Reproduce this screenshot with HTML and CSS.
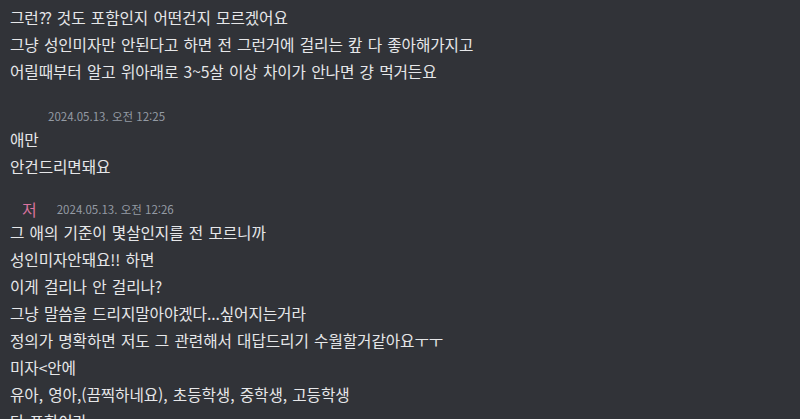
FILE: index.html
```html
<!DOCTYPE html>
<html lang="ko">
<head>
<meta charset="utf-8">
<link rel="stylesheet" href="styles.css">
</head>
<body>
<div class="chat">
  <div class="group first">
    <div class="line">그런<span class="q">??</span> 것도 포함인지 어떤건지 모르겠어요</div>
    <div class="line">그냥 성인미자만 안된다고 하면 전 그런거에 걸리는 캎 다 좋아해가지고</div>
    <div class="line">어릴때부터 알고 위아래로 3~5살 이상 차이가 안나면 걍 먹거든요</div>
  </div>
  <div class="group g2">
    <div class="header h1"><span class="time">2024.05.13. 오전 12:25</span></div>
    <div class="line">애만</div>
    <div class="line">안건드리면돼요</div>
  </div>
  <div class="group g3">
    <div class="header h2"><span class="name">저</span><span class="time">2024.05.13. 오전 12:26</span></div>
    <div class="line">그 애의 기준이 몇살인지를 전 모르니까</div>
    <div class="line">성인미자안돼요!! 하면</div>
    <div class="line">이게 걸리나 안 걸리나?</div>
    <div class="line">그냥 말씀을 드리지말아야겠다...싶어지는거라</div>
    <div class="line">정의가 명확하면 저도 그 관련해서 대답드리기 수월할거같아요ㅜㅜ</div>
    <div class="line">미자&lt;안에</div>
    <div class="line">유아, 영아,(끔찍하네요), 초등학생, 중학생, 고등학생</div>
    <div class="line">다 포함이라</div>
  </div>
</div>
</body>
</html>
```
FILE: styles.css
```css
html, body {
  margin: 0;
  padding: 0;
  background: #313338;
  overflow: hidden;
}
body {
  font-family: "Noto Sans CJK KR", "Noto Sans", sans-serif;
  color: #e6e7e9;
}
.chat {
  padding: 4px 0 0 10px;
  display: flex;
  flex-direction: column;
}
.line {
  font-size: 15.7px;
  line-height: 27px;
  height: 27px;
  white-space: nowrap;
  letter-spacing: -0.1px;
  word-spacing: 1px;
}
.q {
  letter-spacing: -1.5px;
  margin-right: 1px;
}
.g2 { margin-top: 22px; }
.g3 { margin-top: 20px; }
.header {
  height: 19px;
  display: flex;
  align-items: center;
}
.h1 { padding-left: 38px; }
.h2 { padding-left: 12px; }
.name {
  font-size: 16px;
  color: #d9729e;
  margin-right: 20px;
  line-height: 19px;
}
.time {
  font-size: 11.5px;
  color: #949ba4;
  line-height: 19px;
}
```
